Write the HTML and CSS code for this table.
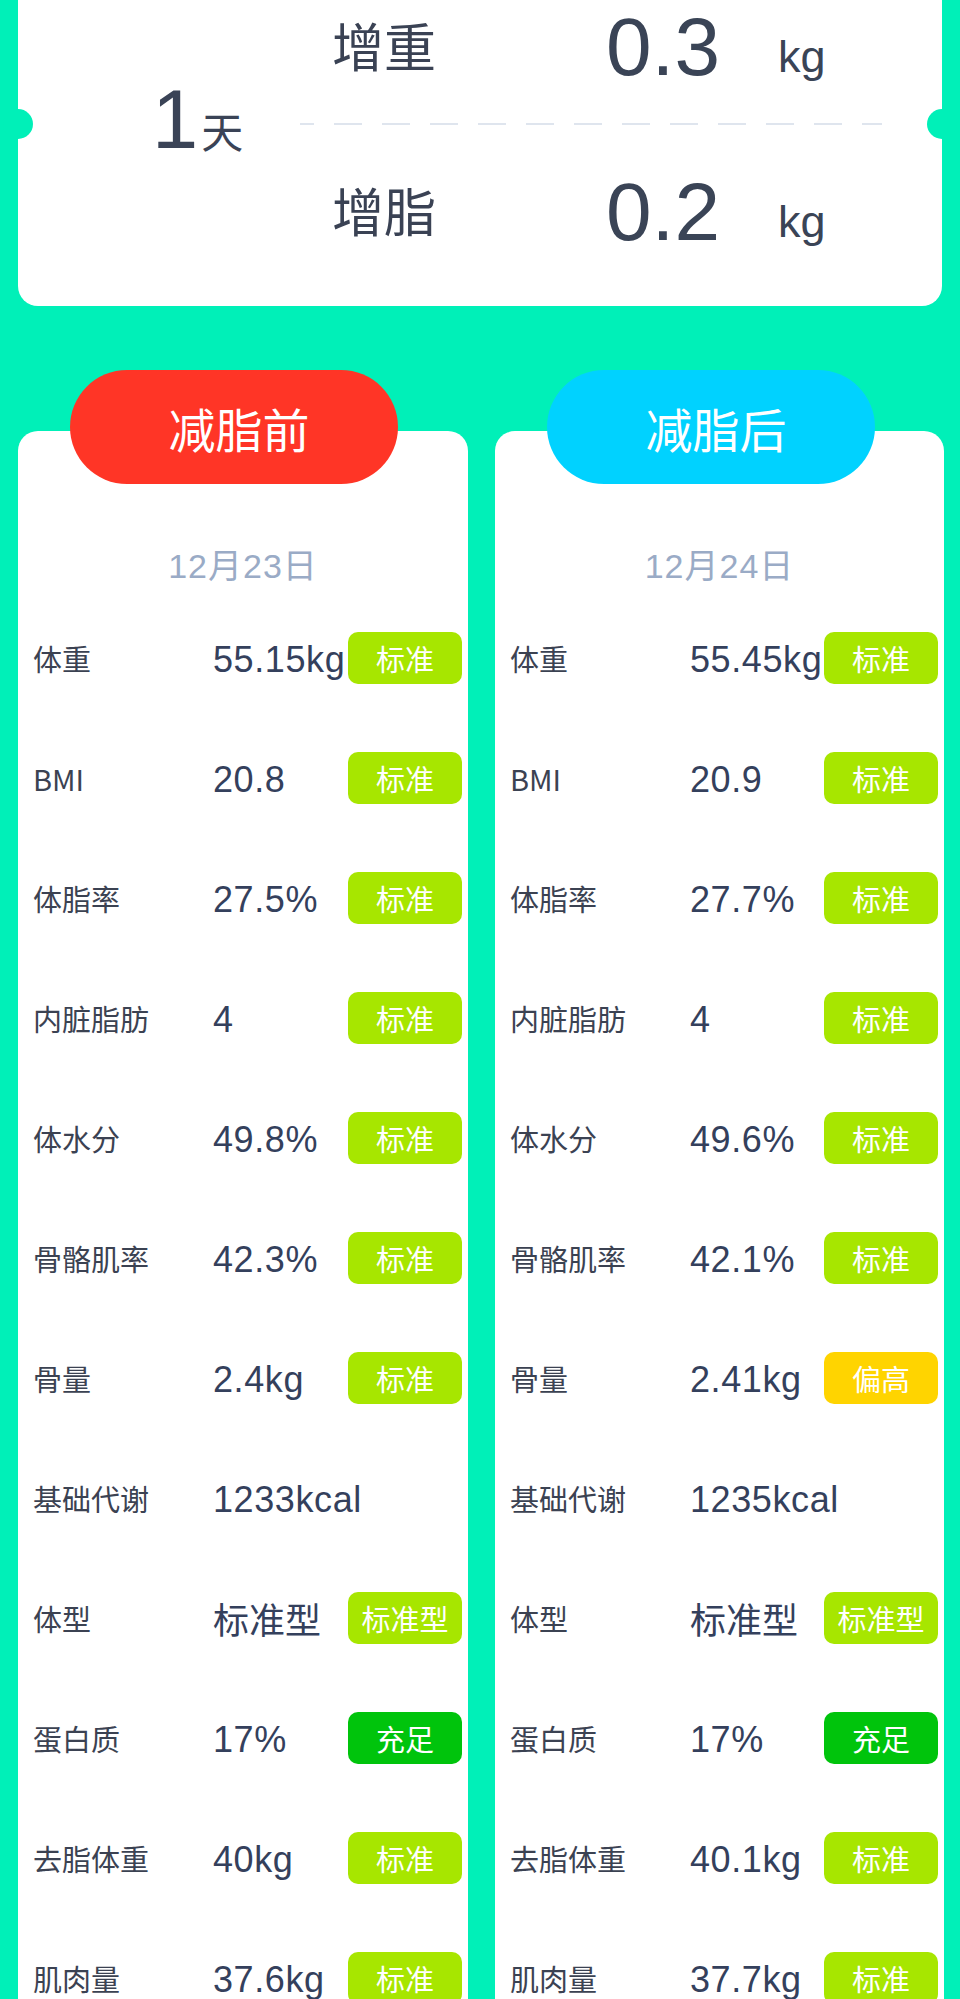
FILE: index.html
```html
<!DOCTYPE html>
<html lang="zh-CN">
<head>
<meta charset="utf-8">
<title>减脂对比</title>
<link rel="stylesheet" href="styles.css">
</head>
<body>
<section class="summary">
  <div class="days"><span class="days-num">1</span><span class="days-unit">天</span></div>
  <div class="changes">
    <div class="change">
      <span class="change-label">增重</span>
      <span class="change-value">0.3</span>
      <span class="change-unit">kg</span>
    </div>
    <div class="divider"></div>
    <div class="change change-second">
      <span class="change-label">增脂</span>
      <span class="change-value">0.2</span>
      <span class="change-unit">kg</span>
    </div>
  </div>
</section>

<section class="compare">
  <div class="col col-left">
    <div class="pill pill-before">减脂前</div>
    <div class="card">
      <div class="date">12月23日</div>
      <div class="row"><span class="label">体重</span><span class="value">55.15kg</span><span class="badge std">标准</span></div>
      <div class="row"><span class="label">BMI</span><span class="value">20.8</span><span class="badge std">标准</span></div>
      <div class="row"><span class="label">体脂率</span><span class="value">27.5%</span><span class="badge std">标准</span></div>
      <div class="row"><span class="label">内脏脂肪</span><span class="value">4</span><span class="badge std">标准</span></div>
      <div class="row"><span class="label">体水分</span><span class="value">49.8%</span><span class="badge std">标准</span></div>
      <div class="row"><span class="label">骨骼肌率</span><span class="value">42.3%</span><span class="badge std">标准</span></div>
      <div class="row"><span class="label">骨量</span><span class="value">2.4kg</span><span class="badge std">标准</span></div>
      <div class="row"><span class="label">基础代谢</span><span class="value">1233kcal</span></div>
      <div class="row"><span class="label">体型</span><span class="value cjk">标准型</span><span class="badge std">标准型</span></div>
      <div class="row"><span class="label">蛋白质</span><span class="value">17%</span><span class="badge ok">充足</span></div>
      <div class="row"><span class="label">去脂体重</span><span class="value">40kg</span><span class="badge std">标准</span></div>
      <div class="row"><span class="label">肌肉量</span><span class="value">37.6kg</span><span class="badge std">标准</span></div>
    </div>
  </div>
  <div class="col col-right">
    <div class="pill pill-after">减脂后</div>
    <div class="card">
      <div class="date">12月24日</div>
      <div class="row"><span class="label">体重</span><span class="value">55.45kg</span><span class="badge std">标准</span></div>
      <div class="row"><span class="label">BMI</span><span class="value">20.9</span><span class="badge std">标准</span></div>
      <div class="row"><span class="label">体脂率</span><span class="value">27.7%</span><span class="badge std">标准</span></div>
      <div class="row"><span class="label">内脏脂肪</span><span class="value">4</span><span class="badge std">标准</span></div>
      <div class="row"><span class="label">体水分</span><span class="value">49.6%</span><span class="badge std">标准</span></div>
      <div class="row"><span class="label">骨骼肌率</span><span class="value">42.1%</span><span class="badge std">标准</span></div>
      <div class="row"><span class="label">骨量</span><span class="value">2.41kg</span><span class="badge high">偏高</span></div>
      <div class="row"><span class="label">基础代谢</span><span class="value">1235kcal</span></div>
      <div class="row"><span class="label">体型</span><span class="value cjk">标准型</span><span class="badge std">标准型</span></div>
      <div class="row"><span class="label">蛋白质</span><span class="value">17%</span><span class="badge ok">充足</span></div>
      <div class="row"><span class="label">去脂体重</span><span class="value">40.1kg</span><span class="badge std">标准</span></div>
      <div class="row"><span class="label">肌肉量</span><span class="value">37.7kg</span><span class="badge std">标准</span></div>
    </div>
  </div>
</section>
</body>
</html>
```

FILE: styles.css
```css
html, body {
  margin: 0;
  padding: 0;
}

body {
  width: 960px;
  height: 1999px;
  overflow: hidden;
  background: #00f0b8;
  font-family: "Liberation Sans", "Noto Sans CJK SC", sans-serif;
  color: #3a4356;
}

/* ---------- summary ticket ---------- */
.summary {
  margin: 0 18px;
  height: 306px;
  box-sizing: border-box;
  background: #ffffff;
  border-radius: 0 0 20px 20px;
  position: relative;
  display: flex;
}

.summary::before,
.summary::after {
  content: "";
  position: absolute;
  top: 109px;
  width: 30px;
  height: 30px;
  border-radius: 50%;
  background: #00f0b8;
}

.summary::before { left: -15px; }
.summary::after { right: -15px; }

.days {
  width: 282px;
  flex-shrink: 0;
  box-sizing: border-box;
  padding-left: 134px;
  padding-top: 78px;
  line-height: 1;
  white-space: nowrap;
  color: #3a4356;
}

.days-num {
  font-size: 83px;
}

.days-unit {
  font-family: "Noto Sans CJK SC", sans-serif;
  font-size: 42px;
  margin-left: 3px;
}

.changes {
  flex: 1;
  padding-right: 60px;
  display: flex;
  flex-direction: column;
}

.change {
  height: 90px;
  display: flex;
  align-items: flex-start;
  line-height: 1;
  white-space: nowrap;
}

.change-second {
  margin-top: 40px;
}

.change-label {
  width: 306px;
  box-sizing: border-box;
  padding-left: 32px;
  margin-top: 19px;
  font-family: "Noto Sans CJK SC", sans-serif;
  font-size: 52px;
  color: #3a4254;
}

.change-value {
  width: 172px;
  margin-top: 6px;
  font-size: 82px;
  color: #3a4456;
}

.change-unit {
  margin-top: 34px;
  font-size: 45px;
  color: #3a4456;
}

.divider {
  margin-top: 33px;
  height: 2px;
  background-image: linear-gradient(to right, #dfe5ee 28px, transparent 28px);
  background-size: 48px 2px;
  background-position: -14px 0;
  background-repeat: repeat-x;
}

/* ---------- compare cards ---------- */
.compare {
  display: flex;
  gap: 27px;
  margin: 64px 16px 0 18px;
}

.col {
  display: flex;
  flex-direction: column;
}

.col-left { width: 450px; }
.col-right { width: 449px; }

.pill {
  width: 328px;
  height: 114px;
  box-sizing: border-box;
  padding-left: 10px;
  margin-left: 52px;
  border-radius: 57px;
  display: flex;
  align-items: center;
  justify-content: center;
  color: #ffffff;
  font-family: "Noto Sans CJK SC", sans-serif;
  font-size: 47px;
  position: relative;
  z-index: 1;
}

.pill-before { background: #ff3526; }
.pill-after { background: #00d2ff; }

.card {
  margin-top: -53px;
  background: #ffffff;
  border-radius: 20px 20px 0 0;
  padding-top: 115px;
  padding-bottom: 120px;
}

.date {
  height: 40px;
  line-height: 40px;
  margin-bottom: 12px;
  text-align: center;
  font-size: 34px;
  letter-spacing: 1px;
  color: #9aabc6;
}

.row {
  height: 120px;
  display: flex;
  align-items: center;
  padding: 0 6px 0 15px;
  line-height: 1;
  white-space: nowrap;
}

.label {
  width: 180px;
  flex-shrink: 0;
  font-family: "Noto Sans CJK SC", sans-serif;
  font-size: 29px;
  color: #3b4252;
}

.value {
  flex: 1;
  min-width: 0;
  padding-top: 3px;
  font-size: 36px;
  letter-spacing: 0.6px;
  color: #34405c;
}

.value.cjk {
  font-family: "Noto Sans CJK SC", sans-serif;
  letter-spacing: 0;
  padding-top: 0;
}

.badge {
  width: 114px;
  height: 52px;
  flex-shrink: 0;
  border-radius: 10px;
  display: flex;
  align-items: center;
  justify-content: center;
  color: #ffffff;
  font-family: "Noto Sans CJK SC", sans-serif;
  font-size: 29px;
  position: relative;
}

.std { background: #a7e600; }
.high { background: #ffd400; }
.ok { background: #00c40c; }
```
